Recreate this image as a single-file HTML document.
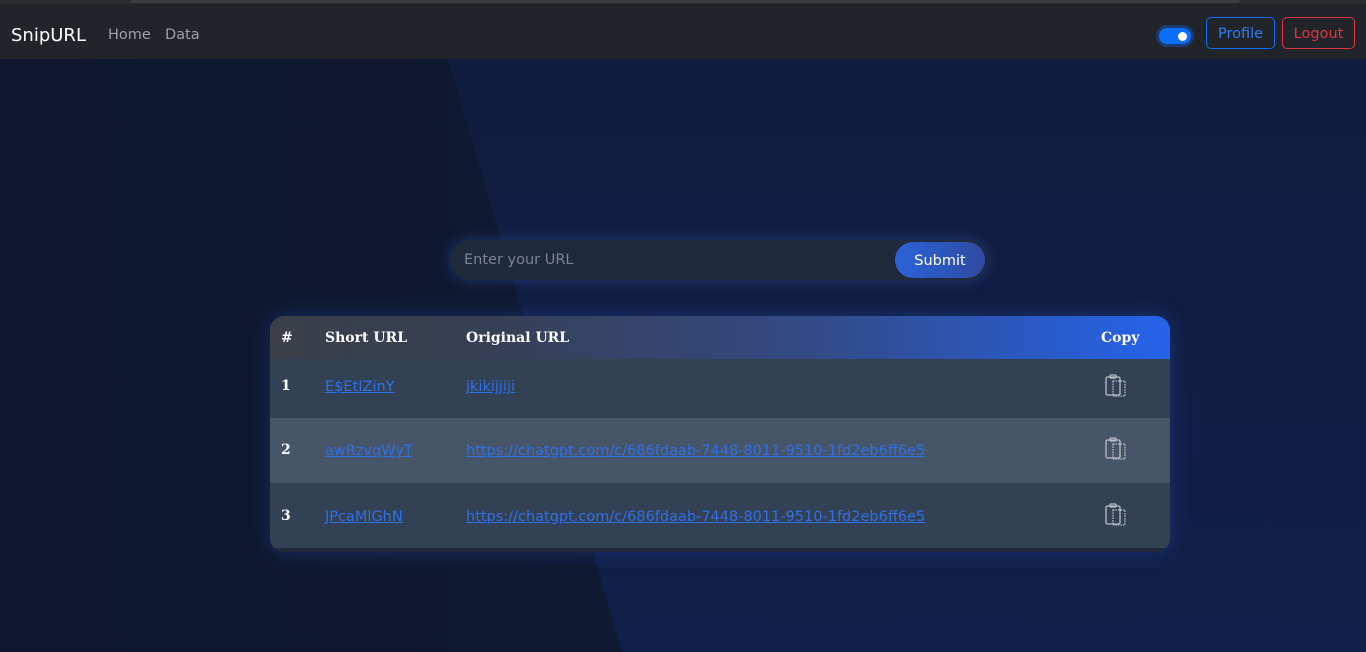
<!DOCTYPE html><html><head><style>
body{margin:0;width:1366px;height:652px;overflow:hidden;font-family:"DejaVu Sans","Liberation Sans",sans-serif;background:#0f1a33;position:relative}
.bg1{position:absolute;left:0;top:59px;width:1366px;height:593px;background:linear-gradient(90deg,#0e172d,#111c38)}
.bg2{position:absolute;top:59px;left:0;width:1366px;height:593px;background:linear-gradient(180deg,#111d3e,#11204a);clip-path:polygon(448px 0,1366px 0,1366px 593px,622px 593px)}
.top{position:absolute;top:0;left:0;width:1366px;height:4px;background:#2a2c2f}
.top i{position:absolute;left:130px;width:1110px;height:3px;background:#3a3c3f;border-radius:0 0 6px 6px}
nav{position:absolute;top:4px;left:0;width:1366px;height:55px;background:#212529}
.brand{position:absolute;left:11px;top:21px;color:#fff;font-size:18px}
.lk{position:absolute;top:23px;color:#9da1a6;font-size:14.5px}
.tog{position:absolute;left:1159px;top:24px;width:32px;height:16px;border-radius:9px;background:#0d6efd;box-shadow:0 0 0 3px #1a3a70}
.tog i{position:absolute;right:4px;top:4px;width:9px;height:9px;border-radius:50%;background:#fff}
.btn{position:absolute;top:13px;height:32px;border-radius:5px;font-size:14.5px;line-height:33px;text-align:center;box-sizing:border-box}
.inp{position:absolute;left:450px;top:240px;width:537px;height:40px;border-radius:20px;background:#1e293b;box-shadow:0 0 14px rgba(60,110,220,.35)}
.inp span{position:absolute;left:14px;top:12px;color:#7b8494;font-size:14.5px}
.sub{position:absolute;right:2px;top:2px;width:90px;height:36px;border-radius:18px;background:linear-gradient(90deg,#2b63d9,#2f4aa0);color:#fff;font-size:14.5px;line-height:38px;text-align:center}
.tbl{position:absolute;left:270px;top:316px;width:900px;height:236px;border-radius:14px;overflow:hidden;background:#212a3a;box-shadow:0 0 20px rgba(40,90,200,.35)}
.hd{height:43px;background:linear-gradient(90deg,#3a3f48 0%,#363f55 25%,#334a85 60%,#2563eb 100%);position:relative;color:#fff;font-family:"DejaVu Serif",serif;font-weight:bold;font-size:14px}
.r{position:absolute;left:0;width:900px;background:#334155;color:#fff}
.r.alt{background:#475569}
.hd span,.r span{position:absolute}
a{color:#2f6fe8;text-decoration:underline;font-size:14.5px}
.n{font-weight:bold;font-family:"DejaVu Serif",serif;font-size:14px}
</style></head><body>
<div class="bg1"></div><div class="bg2"></div>
<div class="top"><i></i></div>
<nav><span class="brand">SnipURL</span><span class="lk" style="left:108px">Home</span><span class="lk" style="left:165px">Data</span>
<div class="tog"><i></i></div>
<div class="btn" style="left:1206px;width:69px;border:1px solid #0d6efd;color:#2f7ef5">Profile</div>
<div class="btn" style="left:1282px;width:73px;border:1px solid #dc3545;color:#dc3545">Logout</div></nav>
<div class="inp"><span>Enter your URL</span><div class="sub">Submit</div></div>
<div class="tbl">
<div class="hd"><span style="left:11px;top:14px">#</span><span style="left:55px;top:14px">Short URL</span><span style="left:196px;top:14px">Original URL</span><span style="left:831px;top:14px">Copy</span></div>
<div class="r" style="top:43px;height:59px"><span class="n" style="left:11px;top:19px">1</span><span style="left:55px;top:17px"><a>E$EtIZinY</a></span><span style="left:196px;top:17px"><a>jkikijjiji</a></span><span style="left:835px;top:15px"><svg width="22" height="24" viewBox="0 0 22 24" fill="none" stroke="#b8bec8" stroke-width="1.3"><rect x="1" y="3" width="14" height="18" rx="1.5"/><rect x="5" y="1" width="6" height="3" rx="1"/><rect x="8" y="7" width="12" height="15" stroke-dasharray="1.5 1"/></svg></span></div>
<div class="r alt" style="top:102px;height:65px"><span class="n" style="left:11px;top:24px">2</span><span style="left:55px;top:22px"><a>awRzvqWyT</a></span><span style="left:196px;top:22px"><a>https://chatgpt.com/c/686fdaab-7448-8011-9510-1fd2eb6ff6e5</a></span><span style="left:835px;top:19px"><svg width="22" height="24" viewBox="0 0 22 24" fill="none" stroke="#b8bec8" stroke-width="1.3"><rect x="1" y="3" width="14" height="18" rx="1.5"/><rect x="5" y="1" width="6" height="3" rx="1"/><rect x="8" y="7" width="12" height="15" stroke-dasharray="1.5 1"/></svg></span></div>
<div class="r" style="top:167px;height:65px"><span class="n" style="left:11px;top:25px">3</span><span style="left:55px;top:23px"><a>JPcaMlGhN</a></span><span style="left:196px;top:23px"><a>https://chatgpt.com/c/686fdaab-7448-8011-9510-1fd2eb6ff6e5</a></span><span style="left:835px;top:20px"><svg width="22" height="24" viewBox="0 0 22 24" fill="none" stroke="#b8bec8" stroke-width="1.3"><rect x="1" y="3" width="14" height="18" rx="1.5"/><rect x="5" y="1" width="6" height="3" rx="1"/><rect x="8" y="7" width="12" height="15" stroke-dasharray="1.5 1"/></svg></span></div>
</div>
</body></html>
